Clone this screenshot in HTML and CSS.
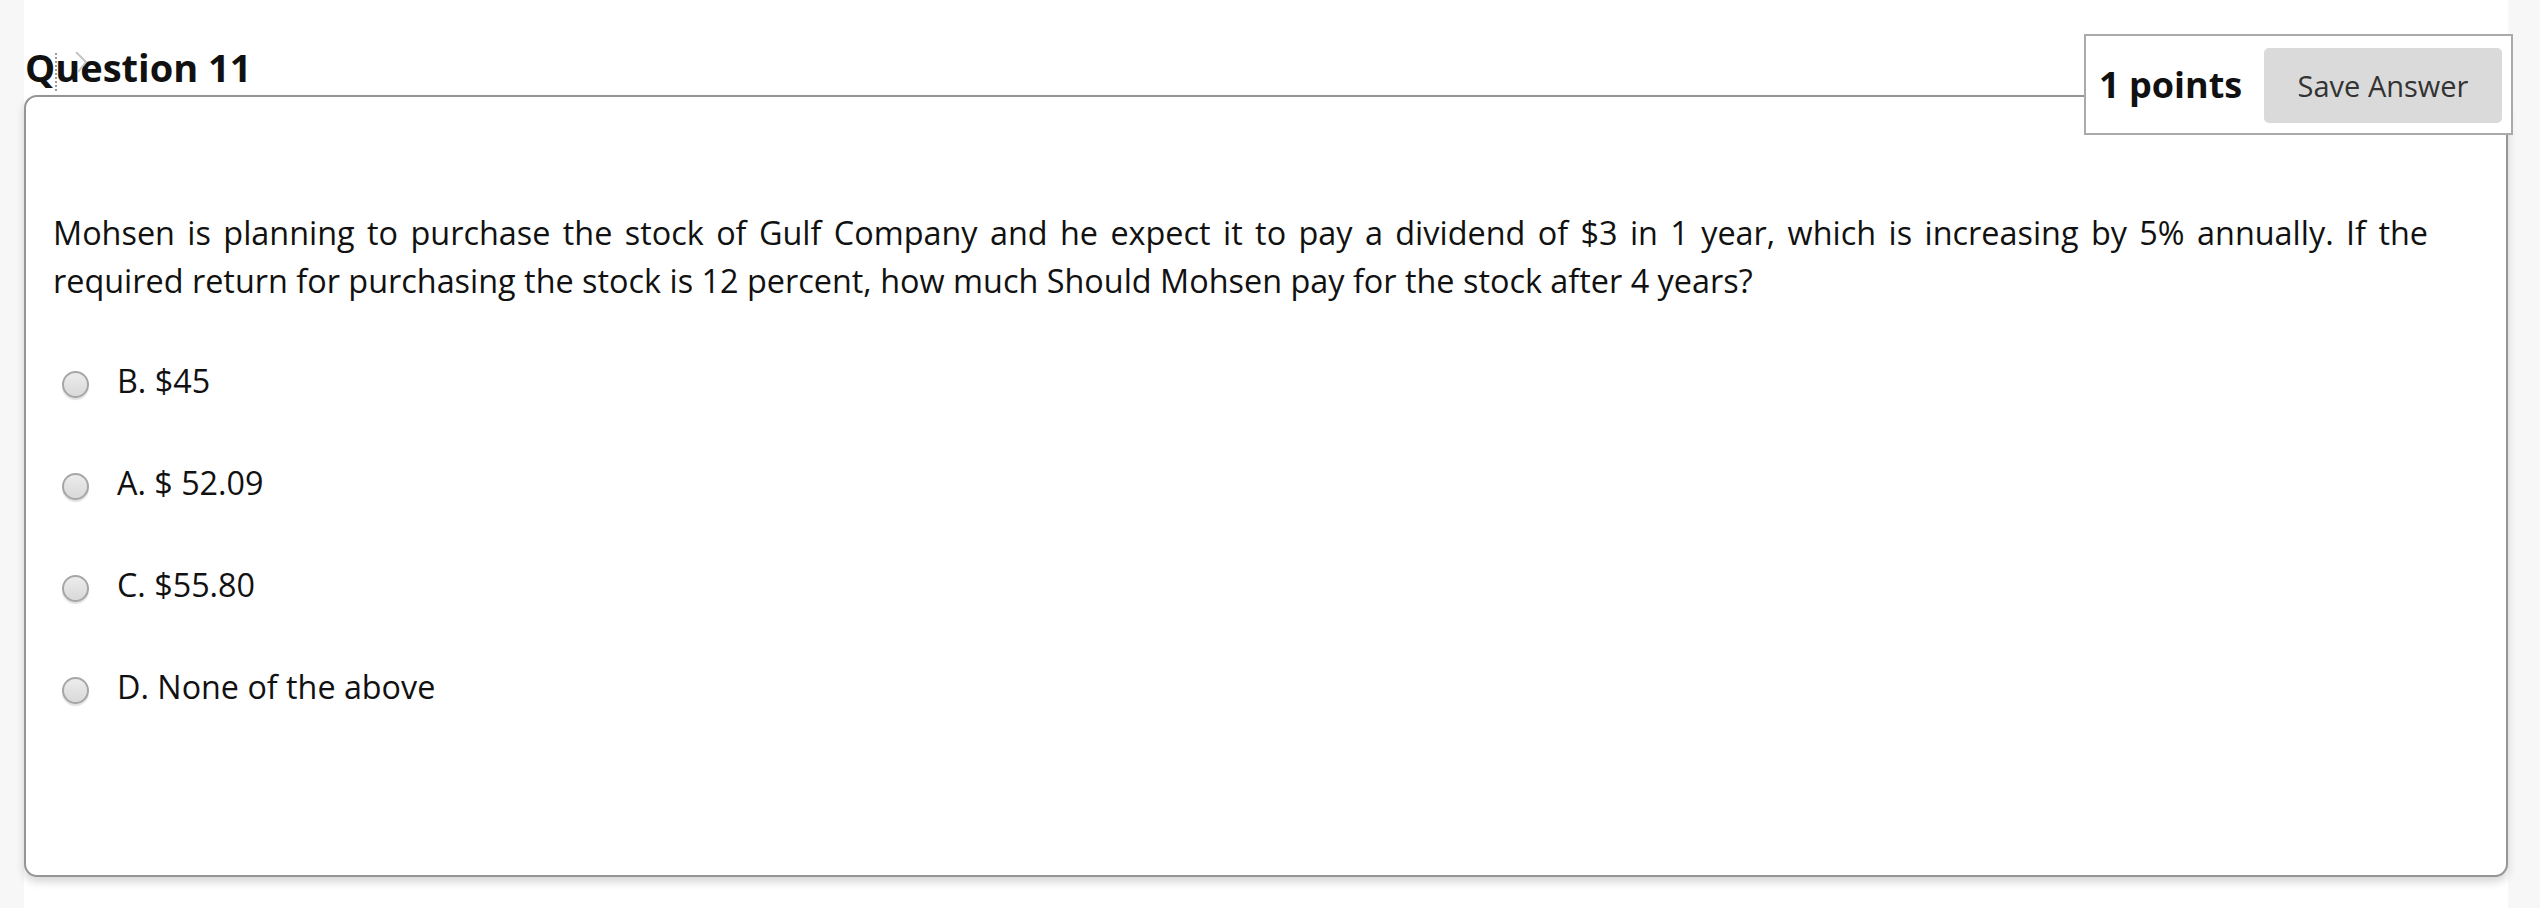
FILE: index.html
```html
<!DOCTYPE html>
<html lang="en">
<head>
<meta charset="utf-8">
<title>Question 11</title>
<link rel="stylesheet" href="styles.css">
</head>
<body>
<main class="page">
  <div class="q-head">
    <h2 class="q-title">Question 11</h2>
    <svg class="cursor-mark" width="40" height="44" viewBox="0 0 40 44" aria-hidden="true">
      <line x1="2" y1="1" x2="2" y2="41" stroke="#9a9a9a" stroke-width="2" stroke-dasharray="2 2"/>
      <polyline points="22,0 32,10 24,20" fill="none" stroke="#c4c4c4" stroke-width="2"/>
    </svg>
  </div>
  <section class="question">
    <div class="points">
      <span class="points-label">1 points</span>
      <button class="save-btn" type="button">Save Answer</button>
    </div>
    <p class="q-text">Mohsen is planning to purchase the stock of Gulf Company and he expect it to pay a dividend of $3 in 1 year, which is increasing by 5% annually. If the required return for purchasing the stock is 12 percent, how much Should Mohsen pay for the stock after 4 years?</p>
    <ul class="options">
      <li class="option"><span class="radio"></span><span class="opt-label">B. $45</span></li>
      <li class="option"><span class="radio"></span><span class="opt-label">A. $ 52.09</span></li>
      <li class="option"><span class="radio"></span><span class="opt-label">C. $55.80</span></li>
      <li class="option"><span class="radio"></span><span class="opt-label">D. None of the above</span></li>
    </ul>
  </section>
</main>
</body>
</html>
```
FILE: styles.css
```css
html, body {
  margin: 0;
  padding: 0;
}
body {
  background: #f7f7f7;
  font-family: "Open Sans", "Noto Sans", sans-serif;
  color: #111;
}
.page {
  margin: 0 32px 0 24px;
  background: #fff;
  min-height: 908px;
  box-sizing: border-box;
}
.q-head {
  position: relative;
  padding-top: 44px;
  height: 95px;
  box-sizing: border-box;
}
.q-title {
  margin: 0;
  font-size: 38px;
  font-weight: 700;
  line-height: 46px;
  color: #111;
  padding-left: 1px;
}
.cursor-mark {
  position: absolute;
  left: 30px;
  top: 52px;
}
.question {
  position: relative;
  border: 2px solid #959595;
  border-radius: 13px;
  height: 782px;
  box-sizing: border-box;
  padding: 111px 78px 0 27px;
  box-shadow: 0 5px 9px rgba(0, 0, 0, 0.16);
  background: #fff;
}
.points {
  position: absolute;
  top: -63px;
  right: -7px;
  width: 429px;
  height: 101px;
  box-sizing: border-box;
  border: 2px solid #aaa;
  background: #fff;
  display: flex;
  align-items: center;
  padding: 0 9px 0 13px;
}
.points-label {
  font-size: 36px;
  font-weight: 700;
  color: #111;
  white-space: nowrap;
}
.save-btn {
  margin-left: auto;
  width: 238px;
  height: 75px;
  margin-top: 2px;
  border: none;
  border-radius: 5px;
  background: #dadada;
  color: #333;
  font-family: "Open Sans", "Noto Sans", sans-serif;
  font-size: 29px;
  padding: 0;
}
.q-text {
  margin: 0;
  font-size: 32.4px;
  line-height: 48px;
  text-align: justify;
  color: #111;
}
.options {
  list-style: none;
  margin: 52px 0 0;
  padding: 0;
  display: flex;
  flex-direction: column;
  gap: 54px;
}
.option {
  display: flex;
  align-items: flex-start;
  height: 48px;
}
.radio {
  width: 27px;
  height: 27px;
  box-sizing: border-box;
  border-radius: 50%;
  border: 2px solid #a6a6a6;
  background: linear-gradient(#ececec, #d9d9d9);
  box-shadow: 0 2px 1px rgba(0, 0, 0, 0.12);
  margin: 15px 28px 0 9px;
  flex: none;
}
.opt-label {
  font-size: 32.3px;
  line-height: 48px;
  color: #111;
}
```
